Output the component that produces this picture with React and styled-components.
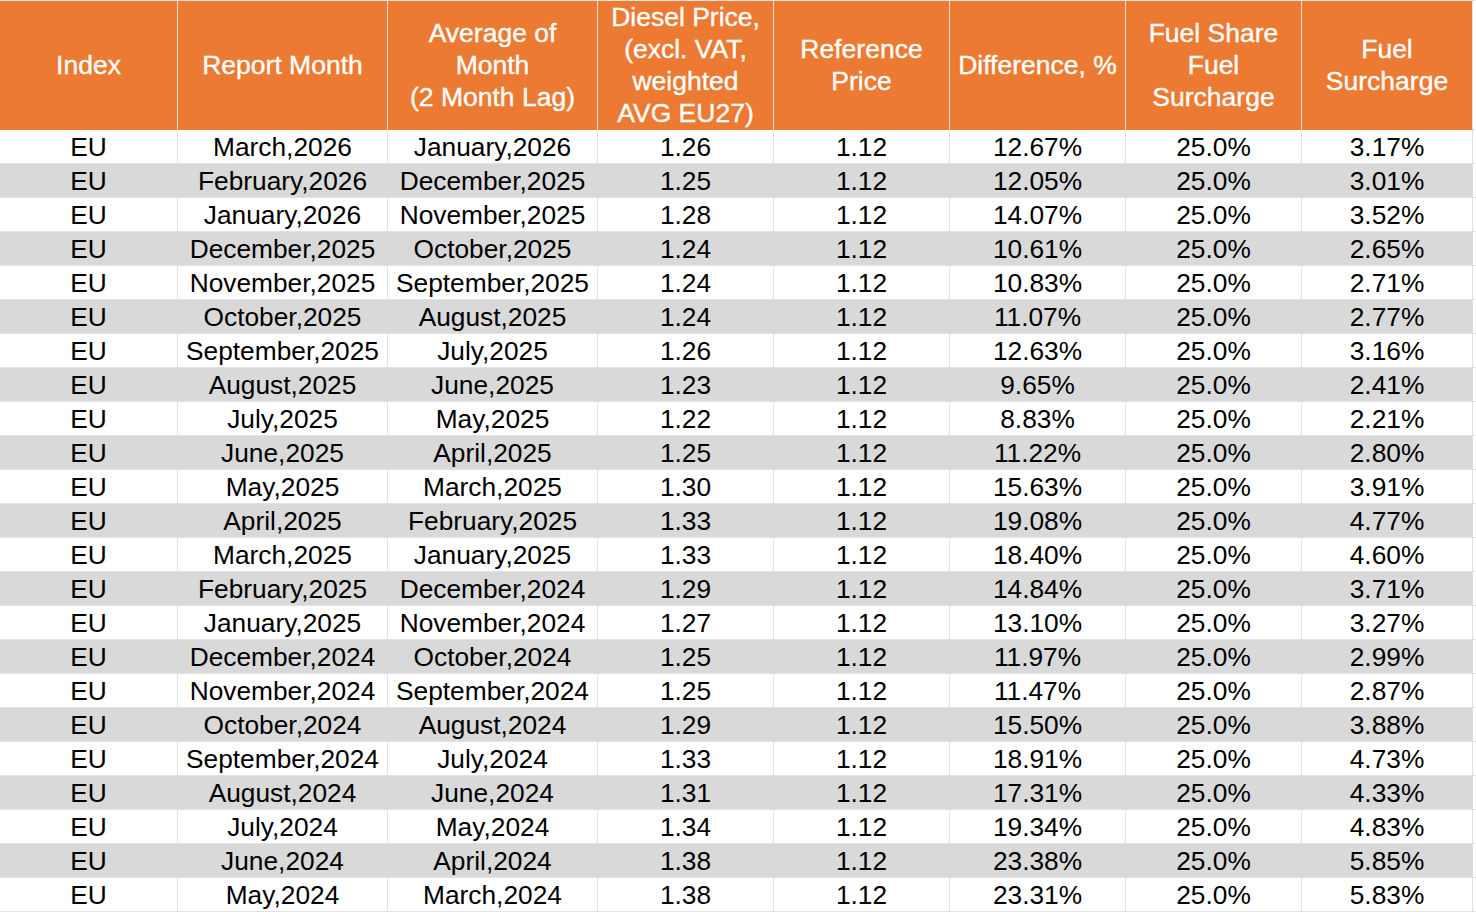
import styled, { createGlobalStyle } from "styled-components"

const GlobalStyle = createGlobalStyle`
  html, body {
    margin: 0;
    padding: 0;
    background: #FFF;
  }
  body {
    font-family: "Liberation Sans", Arial, sans-serif;
  }
`

const Sheet = styled.div`
  display: grid;
  grid-template-columns: 178px 210px 210px 176px 176px 176px 176px 171px 1fr;
  width: 100%;
  border-top: 1px solid #E2E2E2;
  box-sizing: border-box;
`

const HeadCell = styled.div`
  display: flex;
  align-items: center;
  justify-content: center;
  height: 129px;
  box-sizing: border-box;
  background: ${(p) => (p.$blank ? "#FFF" : "#ED7A32")};
  border-bottom: 1px solid ${(p) => (p.$blank ? "#E2E2E2" : "#ED7A32")};
  border-right: 1px solid ${(p) => (p.$blank ? "#FFF" : "#E2E2E2")};
  color: #FFF;
  font-size: 26.5px;
  font-weight: 400;
  -webkit-text-stroke: 0.35px #FFF;
  line-height: 32px;
  text-align: center;
  white-space: pre-line;
`

const Cell = styled.div`
  display: flex;
  align-items: center;
  justify-content: center;
  height: 34px;
  box-sizing: border-box;
  padding-top: 1px;
  background: ${(p) => (p.$shaded ? "#D9D9D9" : "#FFF")};
  border-bottom: 1px solid #E2E2E2;
  border-right: 1px solid ${(p) => (p.$shaded ? "#D9D9D9" : "#E2E2E2")};
  color: #000;
  font-size: 26.3px;
  white-space: nowrap;
`

const Spare = styled.div`
  height: 34px;
  box-sizing: border-box;
  background: #FFF;
  border-bottom: 1px solid #E2E2E2;
`

const headers = [
  "Index",
  "Report Month",
  "Average of\nMonth\n(2 Month Lag)",
  "Diesel Price,\n(excl. VAT,\nweighted\nAVG EU27)",
  "Reference\nPrice",
  "Difference, %",
  "Fuel Share\nFuel\nSurcharge",
  "Fuel\nSurcharge",
]

const rows = [
  ["March,2026", "January,2026", "1.26", "12.67%", "3.17%"],
  ["February,2026", "December,2025", "1.25", "12.05%", "3.01%"],
  ["January,2026", "November,2025", "1.28", "14.07%", "3.52%"],
  ["December,2025", "October,2025", "1.24", "10.61%", "2.65%"],
  ["November,2025", "September,2025", "1.24", "10.83%", "2.71%"],
  ["October,2025", "August,2025", "1.24", "11.07%", "2.77%"],
  ["September,2025", "July,2025", "1.26", "12.63%", "3.16%"],
  ["August,2025", "June,2025", "1.23", "9.65%", "2.41%"],
  ["July,2025", "May,2025", "1.22", "8.83%", "2.21%"],
  ["June,2025", "April,2025", "1.25", "11.22%", "2.80%"],
  ["May,2025", "March,2025", "1.30", "15.63%", "3.91%"],
  ["April,2025", "February,2025", "1.33", "19.08%", "4.77%"],
  ["March,2025", "January,2025", "1.33", "18.40%", "4.60%"],
  ["February,2025", "December,2024", "1.29", "14.84%", "3.71%"],
  ["January,2025", "November,2024", "1.27", "13.10%", "3.27%"],
  ["December,2024", "October,2024", "1.25", "11.97%", "2.99%"],
  ["November,2024", "September,2024", "1.25", "11.47%", "2.87%"],
  ["October,2024", "August,2024", "1.29", "15.50%", "3.88%"],
  ["September,2024", "July,2024", "1.33", "18.91%", "4.73%"],
  ["August,2024", "June,2024", "1.31", "17.31%", "4.33%"],
  ["July,2024", "May,2024", "1.34", "19.34%", "4.83%"],
  ["June,2024", "April,2024", "1.38", "23.38%", "5.85%"],
  ["May,2024", "March,2024", "1.38", "23.31%", "5.83%"],
]

const App = () => {
  return (
    <>
      <GlobalStyle />
      <Sheet>
        {headers.map((h) => (
          <HeadCell key={h}>{h}</HeadCell>
        ))}
        <HeadCell $blank />
        {rows.map(([report, avg, diesel, diff, surcharge], i) => {
          const shaded = i % 2 === 1
          const values = ["EU", report, avg, diesel, "1.12", diff, "25.0%", surcharge]
          return [
            ...values.map((v, j) => (
              <Cell key={`${i}-${j}`} $shaded={shaded}>{v}</Cell>
            )),
            <Spare key={`${i}-spare`} />,
          ]
        })}
      </Sheet>
    </>
  )
}

export default App
